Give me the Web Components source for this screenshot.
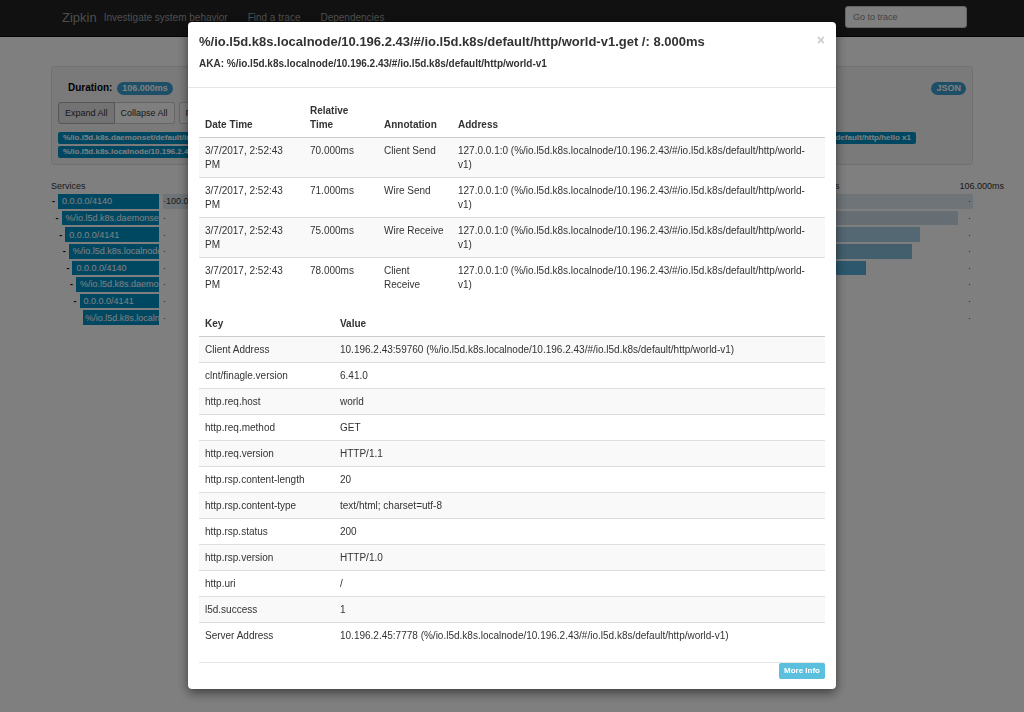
<!DOCTYPE html>
<html lang="en">
<head>
<meta charset="utf-8">
<title>Zipkin</title>
<style>
  body { margin: 0; background: #fff; color: #333; font: 10px/14px "Liberation Sans", Arial, sans-serif; }
</style>
</head>
<body>
<zipkin-nav></zipkin-nav>
<trace-summary></trace-summary>
<trace-timeline></trace-timeline>
<span-modal>
  <span slot="title">%/io.l5d.k8s.localnode/10.196.2.43/#/io.l5d.k8s/default/http/world-v1.get /: 8.000ms</span>
  <span slot="aka">AKA: %/io.l5d.k8s.localnode/10.196.2.43/#/io.l5d.k8s/default/http/world-v1</span>
  <annotation-table></annotation-table>
  <tag-table></tag-table>
</span-modal>
<script>
const define = (name, html) => customElements.define(name, class extends HTMLElement {
  constructor() {
    super();
    this.attachShadow({ mode: "open" }).innerHTML = "<style>*{box-sizing:border-box}</style>" + html;
  }
});

define("zipkin-nav", `
<style>
  :host { display: block; background: #222; border-bottom: 1px solid #080808; }
  nav { display: flex; align-items: center; height: 36px; padding: 0 57px 0 62px; color: #9d9d9d; }
  a { color: inherit; text-decoration: none; }
  .brand { font-size: 13px; margin-right: 7px; }
  .tag { margin-right: 20px; }
  .link { margin-right: 20px; }
  input { margin-left: auto; width: 122px; height: 22px; margin-bottom: 2px; padding: 0 7px; border: 1px solid #ccc; border-radius: 3px; background: #fff; font: 9px/14px "Liberation Sans", Arial, sans-serif; }
  input::placeholder { color: #888; opacity: 1; }
</style>
<nav>
  <a class="brand" href="#">Zipkin</a><span class="tag">Investigate system behavior</span>
  <a class="link" href="#">Find a trace</a><a class="link" href="#">Dependencies</a>
  <input aria-label="Trace id" placeholder="Go to trace">
</nav>`);

define("trace-summary", `
<style>
  :host { display: block; margin: 29px 51px 0; padding: 15px 6px 6px; background: #f5f5f5; border: 1px solid #e3e3e3; border-radius: 3px; }
  .top { display: flex; align-items: center; justify-content: space-between; height: 12px; padding-left: 10px; color: #000; }
  .pill { display: inline-block; margin-left: 2px; padding: 0 5px; border-radius: 7px; background: #3a9fd0; color: #fff; font-weight: bold; font-size: 9px; line-height: 13px; text-decoration: none; }
  .buttons { display: flex; margin-top: 8px; }
  button { height: 22px; padding: 0 6px; border: 1px solid #ccc; background: #fff; color: #333; font: 9px/14px "Liberation Sans", Arial, sans-serif; }
  button:first-child { background: #e6e6e6; border-color: #adadad; border-radius: 3px 0 0 3px; }
  button:nth-child(2) { border-left: 0; border-radius: 0 3px 3px 0; margin-right: 4px; }
  button:nth-child(3) { border-radius: 3px; }
  .labels { display: flex; justify-content: space-between; padding-right: 50px; margin-top: 8px; }
  .labels + .labels { margin-top: 2px; }
  .labels span { height: 12px; padding: 0 5px; border-radius: 2px; background: #0090c5; color: #fff; font: bold 8px/12px "Liberation Sans", Arial, sans-serif; }
</style>
<div class="top"><b>Duration: <span class="pill">106.000ms</span></b><a class="pill" href="#">JSON</a></div>
<div class="buttons"><button>Expand All</button><button>Collapse All</button><button>Filter</button></div>
<div class="labels"><span>%/io.l5d.k8s.daemonset/default/incoming x2</span><span>%/io.l5d.k8s/default/http/hello x1</span></div>
<div class="labels"><span>%/io.l5d.k8s.localnode/10.196.2.43</span></div>`);

/* name, start and end of the span in ms, colour of its bar */
const total = 106;
const services = [
  ["0.0.0.0/4140", 0, 106, "#dee9f0"], ["%/io.l5d.k8s.daemonset", 4, 104, "#cddce8"],
  ["0.0.0.0/4141", 5, 99, "#a8d0e8"], ["%/io.l5d.k8s.localnode", 6, 98, "#86bddb"],
  ["0.0.0.0/4140", 8, 92, "#5aaedb"], ["%/io.l5d.k8s.daemonset", 60, 80, "#3a9fd0"],
  ["0.0.0.0/4141", 64, 79, "#2f8fc0"], ["%/io.l5d.k8s.localnode", 70, 78, "#2080b0"]];
define("trace-timeline", `
<style>
  :host { display: block; margin: 14px 20px 0 51px; color: #333; font-size: 9px; }
  .axis { display: flex; height: 15px; }
  .axis span:nth-child(2) { margin-left: auto; margin-right: 120px; }
  .rows { display: grid; grid-template-rows: repeat(8, 1fr); gap: 2px; height: 131px; margin-right: 31px; }
  .row { display: grid; grid-template-columns: 108px 1fr; column-gap: 4px; align-items: stretch; }
  .service { display: flex; align-items: center; padding-left: calc(100% * var(--depth) / 30); white-space: nowrap; overflow: hidden; }
  .service i { flex: 0 0 7px; padding-left: 1px; font-style: normal; font-weight: bold; color: #000; }
  .service b { flex: 1; align-self: stretch; display: flex; align-items: center; overflow: hidden; padding-left: 4px; background: #0090c5; color: #fff; font-weight: normal; }
  .row:last-child b { padding-left: 2px; }
  .track { position: relative; display: flex; align-items: center; justify-content: space-between; padding-right: 2px; }
  .bar { position: absolute; top: 0; bottom: 0; z-index: -1; left: calc(100% * var(--from) / ${total}); right: calc(100% - 100% * var(--to) / ${total}); }
</style>
<div class="axis"><span>Services</span><span>84.800ms</span><span>106.000ms</span></div>
<div class="rows">${services.map(([name, from, to, c], i) => `<div class="row"><div class="service" style="--depth:${i}"><i>${i < 7 ? "-" : ""}</i><b>${name}</b></div><div class="track"><div class="bar" style="--from:${from};--to:${to};background:${c}"></div><span>·${i ? "" : "100.000ms"}</span><span>·</span></div></div>`).join("")}</div>`);

define("span-modal", `
<style>
  :host { position: fixed; inset: 0; z-index: 10; overflow: auto; background: rgba(0,0,0,.5); }
  section { max-width: 648px; margin: 22px auto; background: #fff; border-radius: 4px; box-shadow: 0 4px 11px rgba(0,0,0,.5), 0 0 1px rgba(0,0,0,.4); }
  header { display: grid; grid-template-columns: 1fr auto; padding: 11px 11px 16px; border-bottom: 1px solid #e5e5e5; }
  h4 { margin: 0; font-size: 13px; line-height: 18px; }
  h5 { margin: 6px 0 0; font-size: 10px; line-height: 14px; }
  .close { align-self: start; padding: 0; border: 0; background: none; color: #ccc; font: bold 14px/14px "Liberation Sans", Arial, sans-serif; }
  .body { padding: 10px 11px 0; }
  footer { display: flex; justify-content: flex-end; margin: 0 11px; padding-bottom: 10px; border-top: 1px solid #e5e5e5; }
  .info { height: 16px; padding: 0 5px; border: 0; border-radius: 2px; background: #5bc0de; color: #fff; font: bold 8px/16px "Liberation Sans", Arial, sans-serif; }
</style>
<section role="dialog" aria-modal="true">
  <header><h4><slot name="title"></slot></h4><button class="close" aria-label="Close">×</button><h5><slot name="aka"></slot></h5></header>
  <div class="body"><slot></slot></div>
  <footer><button class="info">More Info</button></footer>
</section>`);

const tableCss = `
  :host { display: block; margin-bottom: 14px; }
  table { width: 100%; border-collapse: separate; border-spacing: 0; table-layout: fixed; font-size: 10px; line-height: 14px; }
  th { text-align: left; vertical-align: bottom; padding: 6px 6px 5px; border-bottom: 1px solid #ccc; }
  td { vertical-align: top; padding: 6px 6px 5px; border-top: 1px solid #ddd; }
  tr:first-child td { border-top: 0; }
  tbody tr:nth-child(odd) { background: #f9f9f9; }`;
const table = (heads, widths, rows) => `<table><colgroup>${widths.map(w => `<col${w ? ` style="width:${w}px"` : ""}>`).join("")}</colgroup>
<thead><tr>${heads.map(h => `<th scope="col">${h}</th>`).join("")}</tr></thead>
<tbody>${rows.map(r => `<tr>${r.map(c => `<td>${c}</td>`).join("")}</tr>`).join("")}</tbody></table>`;

const host = "%/io.l5d.k8s.localnode/10.196.2.43/#/io.l5d.k8s/default/http/world-v1";
define("annotation-table", `<style>${tableCss} td:last-child { padding-right: 12px; }</style>` +
  table(["Date Time", "Relative Time", "Annotation", "Address"], [105, 74, 74, 0],
    [["70", "Client Send"], ["71", "Wire Send"], ["75", "Wire Receive"], ["78", "Client Receive"]]
      .map(([t, a]) => ["3/7/2017, 2:52:43 PM", t + ".000ms", a, `127.0.0.1:0 (${host})`])));

define("tag-table", `<style>${tableCss}</style>` +
  table(["Key", "Value"], [135, 0], [
    ["Client Address", `10.196.2.43:59760 (${host})`],
    ["clnt/finagle.version", "6.41.0"], ["http.req.host", "world"], ["http.req.method", "GET"],
    ["http.req.version", "HTTP/1.1"], ["http.rsp.content-length", "20"],
    ["http.rsp.content-type", "text/html; charset=utf-8"], ["http.rsp.status", "200"],
    ["http.rsp.version", "HTTP/1.0"], ["http.uri", "/"], ["l5d.success", "1"],
    ["Server Address", `10.196.2.45:7778 (${host})`]]));
</script>
</body>
</html>
